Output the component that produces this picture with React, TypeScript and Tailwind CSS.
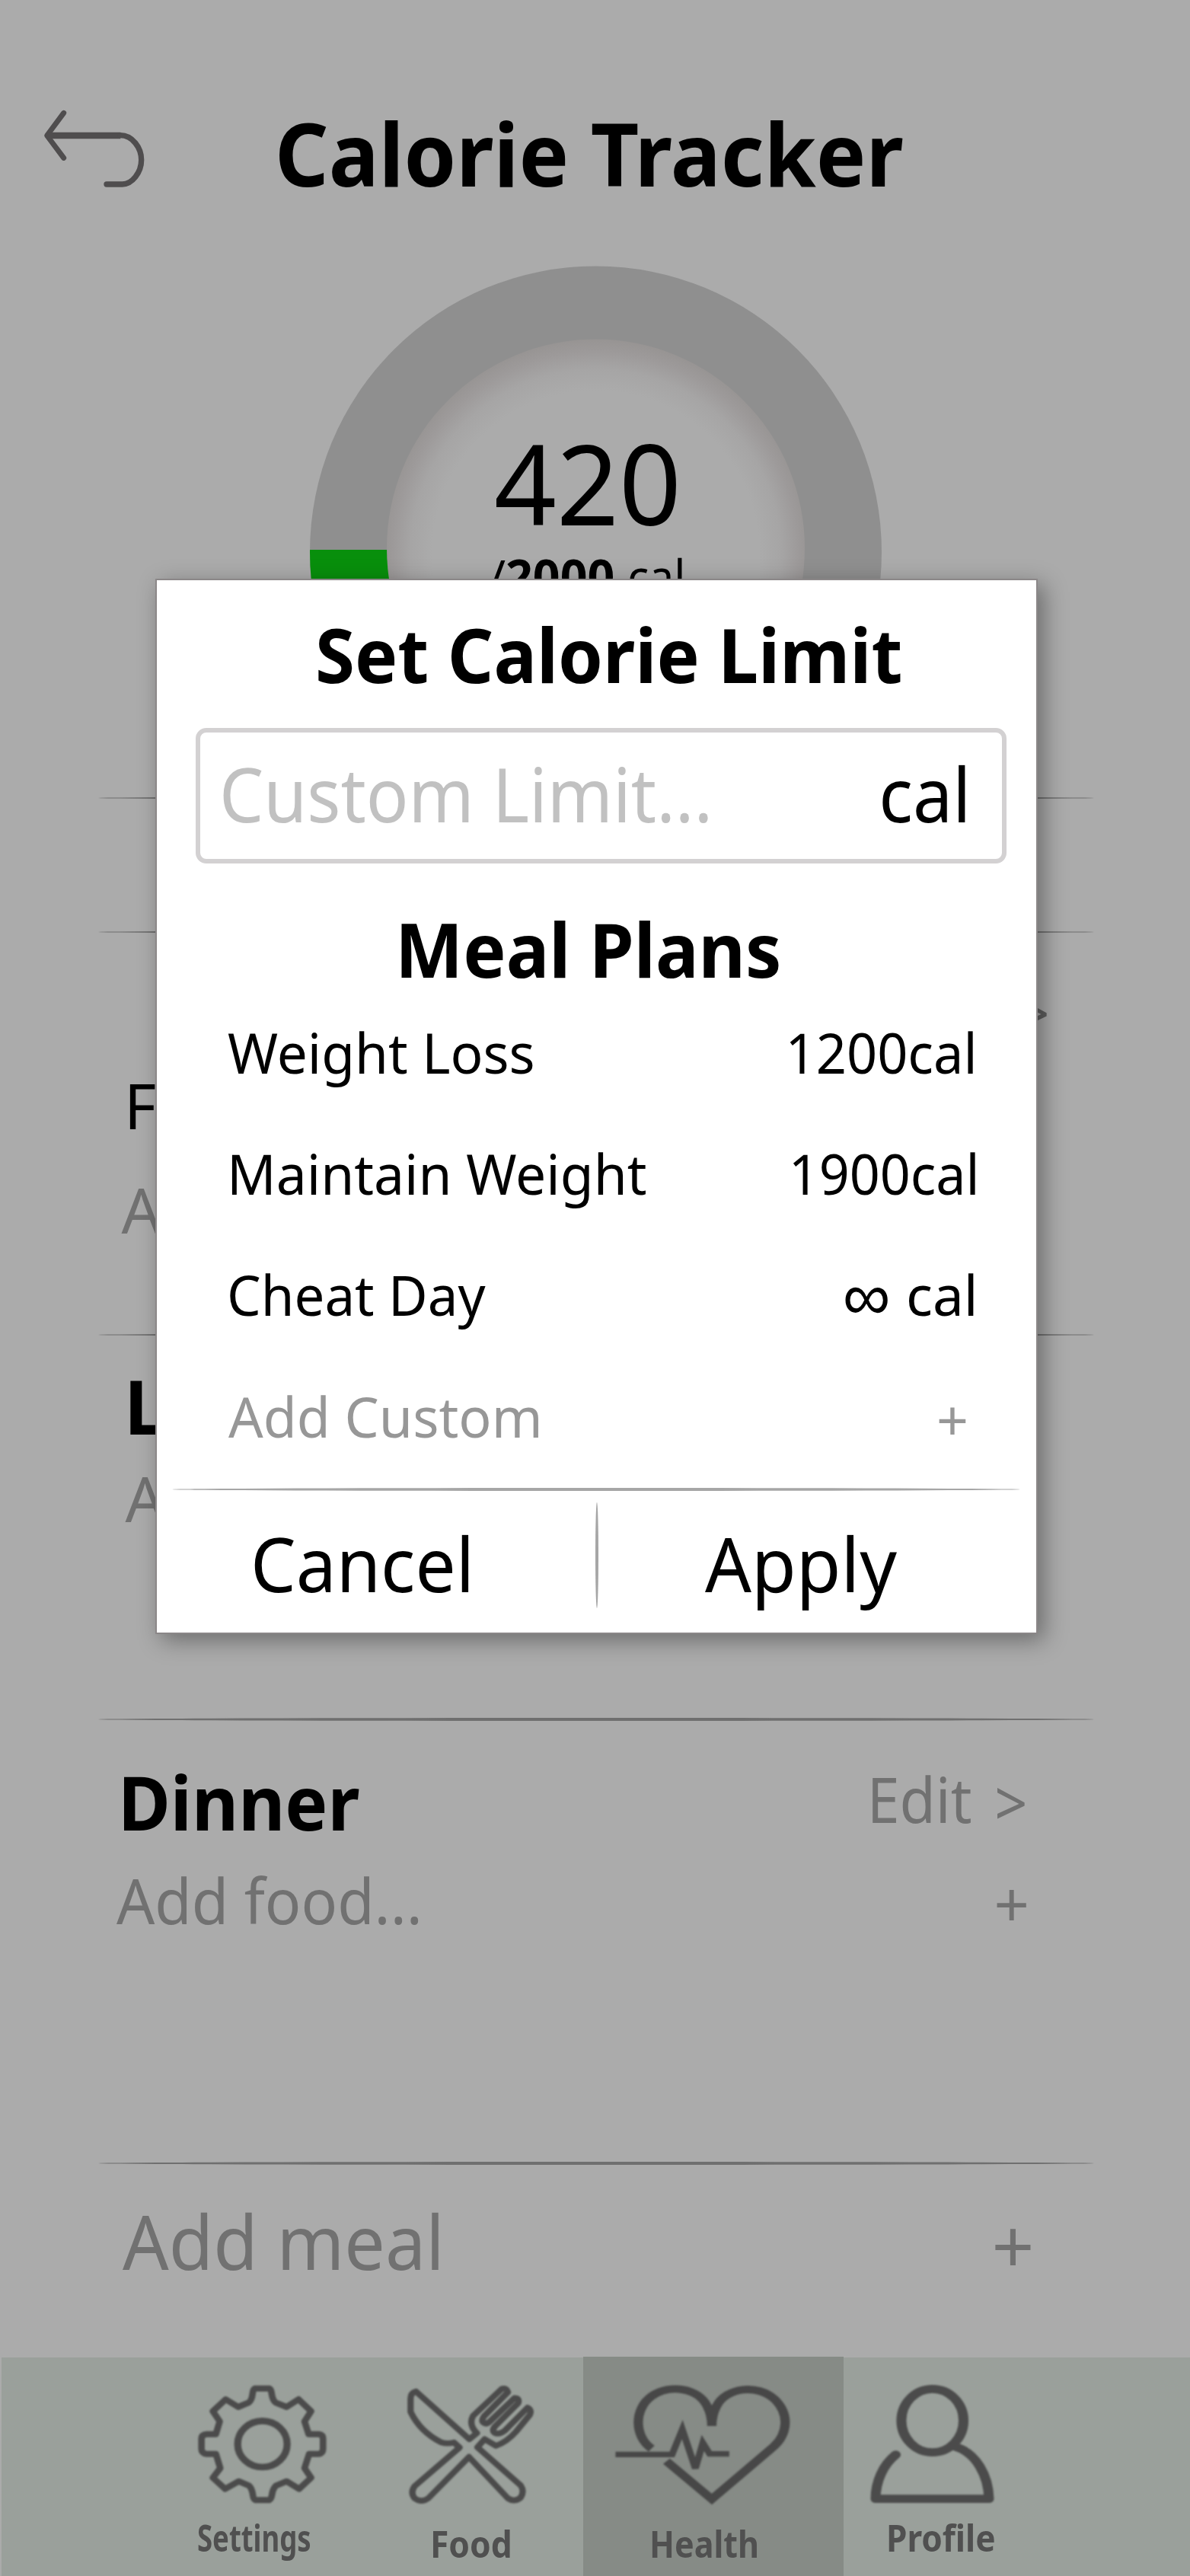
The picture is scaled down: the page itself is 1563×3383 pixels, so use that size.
import React from 'react';

function Divider({ className }: { className: string }) {
  return <div className={`h-[4px] shrink-0 rounded-[50%] ${className}`} />;
}

function BackArrow() {
  return (
    <svg className="h-[130px] w-[150px] shrink-0" viewBox="30 15 450 390" fill="none" stroke="#4f4d4e" strokeLinecap="round" strokeLinejoin="round">
      <path d="M131 55L65 144L131 232" strokeWidth="21" />
      <path d="M66 144H355" strokeWidth="26" strokeLinecap="butt" />
      <path d="M354 143C402 143 437 192 437 240C437 290 400 336 362 336H300" strokeWidth="22" />
    </svg>
  );
}

function CalorieRing() {
  return (
    <svg className="col-start-1 row-start-1 h-[752px] w-[752px]" viewBox="406 349 752 752">
      <defs>
        <clipPath id="ring">
          <circle cx="782.5" cy="725" r="375.5" />
        </clipPath>
        <radialGradient id="well" gradientUnits="userSpaceOnUse" cx="782.5" cy="728" r="283">
          <stop offset="0.76" stopColor="#ababab" />
          <stop offset="0.86" stopColor="#a6a5a5" />
          <stop offset="0.94" stopColor="#9d9a9a" />
          <stop offset="1" stopColor="#979493" />
        </radialGradient>
      </defs>
      <circle cx="782.5" cy="725" r="375.5" fill="#8f8f8f" />
      <rect x="406" y="722" width="376" height="160" fill="#088f0c" clipPath="url(#ring)" />
      <circle cx="782.5" cy="720" r="274.5" fill="url(#well)" />
    </svg>
  );
}

function Header() {
  return (
    <header className="flex h-[349px] items-start pt-[135px] pl-[50px]">
      <BackArrow />
      <h1 className="mt-[1px] ml-[161px] origin-left scale-x-[0.96] text-[114.7px] leading-[129px] font-bold">Calorie Tracker</h1>
    </header>
  );
}

function Progress() {
  return (
    <section className="grid h-[697px] grid-cols-[752px] items-start pl-[406px]">
      <CalorieRing />
      <div className="z-10 col-start-1 row-start-1 pt-[210px]">
        <div className="pl-[243px] text-[147px] leading-[148px]">
          <span className="inline-block origin-left scale-x-[0.975]">420</span>
        </div>
        <div className="mt-[9px] flex items-center text-[62px] leading-[80px]">
          <span className="ml-[235px]">/</span>
          <span className="origin-left scale-x-[1.01] font-bold">2000</span>
          <span className="ml-[18px] origin-left scale-x-[0.95]">cal</span>
        </div>
      </div>
    </section>
  );
}

function Meals() {
  return (
    <>
      <section className="h-[525px] pt-[50px] text-[81.3px] leading-[100px]">
        <div className="flex justify-end pr-[184px] text-[#606060]">
          <span className="mt-[4px] -mb-[4px] origin-right scale-x-[0.93]">&gt;</span>
        </div>
        <div className="mt-[26px] pl-[163px]">F</div>
        <div className="mt-[37px] pl-[159.5px] text-[#717171]">A</div>
      </section>
      <Divider className="ml-[129px] w-[1308px] bg-[#6f6f6f]" />
      <section className="h-[501px] pt-[31px]">
        <h2 className="pl-[163px] text-[98px] leading-[120px] font-bold">L</h2>
        <div className="mt-[12px] pl-[164.5px] text-[81.3px] leading-[100px] text-[#717171]">A</div>
      </section>
      <Divider className="ml-[129px] w-[1308px] bg-[#6f6f6f]" />
      <section className="h-[579px] pt-[46px] text-[81.3px] leading-[100px] text-[#717171]">
        <div className="flex h-[120px] items-center justify-between pr-[213px] pl-[154.5px]">
          <h2 className="origin-left scale-x-[0.96] text-[98px] leading-[120px] font-bold text-black">Dinner</h2>
          <div className="-mt-[6px] flex gap-[27px]">
            <span className="origin-right scale-x-[0.947]">Edit</span>
            <span className="mt-[4px] -mb-[4px] origin-right scale-x-[0.93]">&gt;</span>
          </div>
        </div>
        <div className="mt-[20px] flex justify-between pr-[211px] pl-[152.5px]">
          <span className="origin-left scale-x-[0.969]">Add food...</span>
          <span className="mt-[4px] -mb-[4px]">+</span>
        </div>
      </section>
      <Divider className="ml-[129px] w-[1308px] bg-[#6f6f6f]" />
      <div className="flex h-[253px] justify-between pt-[40px] pr-[204.5px] pl-[160.5px] text-[98px] leading-[120px] text-[#717171]">
        <span className="origin-left scale-x-[0.97]">Add meal</span>
        <span className="mt-[5px]">+</span>
      </div>
    </>
  );
}

function CalorieLimitDialog() {
  return (
    <div className="absolute top-[760px] left-[204px] z-20 h-[1386px] w-[1159px] border-2 border-[#8b8788] bg-white pt-[37px] shadow-[8px_8px_28px_rgba(0,0,0,0.37)]">
      <h2 className="pl-[207.5px] text-[98px] leading-[120px] font-bold">
        <span className="inline-block origin-left scale-x-[0.963]">Set Calorie Limit</span>
      </h2>
      <div className="mt-[37px] ml-[51px] flex h-[178px] w-[1065px] items-center justify-between rounded-[14px] border-[6px] border-[#d3d1d2] pr-[41px] pb-[6px] pl-[25px] text-[98px] leading-[120px]">
        <span className="origin-left scale-x-[0.941] text-[#c1c1c1]">Custom Limit...</span>
        <span className="origin-right scale-x-[0.95]">cal</span>
      </div>
      <h2 className="mt-[57px] pl-[313px] text-[98px] leading-[111px] font-bold">
        <span className="inline-block origin-left scale-x-[0.965]">Meal Plans</span>
      </h2>
      <div className="pr-[77px] pl-[92px] text-[73.5px] leading-[159px] whitespace-nowrap">
        <div className="flex h-[159px] justify-between">
          <span className="ml-[1px] origin-left scale-x-[0.968]">Weight Loss</span>
          <span className="origin-right scale-x-[0.956]">1200cal</span>
        </div>
        <div className="-mr-[3px] flex h-[159px] justify-between">
          <span className="origin-left scale-x-[0.971]">Maintain Weight</span>
          <span className="origin-right scale-x-[0.952]">1900cal</span>
        </div>
        <div className="flex h-[159px] justify-between">
          <span className="origin-left scale-x-[0.963]">Cheat Day</span>
          <div className="flex">
            <span className="text-[88px]">∞</span>
            <span className="ml-[19px] origin-right scale-x-[0.99]">cal</span>
          </div>
        </div>
        <div className="flex h-[159px] justify-between pt-[1px] text-[#979797]">
          <span className="ml-[2px] origin-left scale-x-[0.975]">Add Custom</span>
          <span className="mt-[4px] mr-[12px]">+</span>
        </div>
      </div>
      <Divider className="mt-[16px] ml-[20px] w-[1114px] bg-[#a6a6a6]" />
      <div className="flex h-[186px] text-[98px] leading-[191px]">
        <button className="w-[576px] pl-[123px] text-left">
          <span className="inline-block origin-left scale-x-[0.964]">Cancel</span>
        </button>
        <div className="mt-[15px] h-[139px] w-[4px] shrink-0 rounded-[50%] bg-[#a6a6a6]" />
        <button className="pl-[139.5px] text-left">
          <span className="inline-block origin-left scale-x-[0.975]">Apply</span>
        </button>
      </div>
    </div>
  );
}

const icon = 'h-[210px] w-full shrink-0 blur-[0.8px]';

function BottomNav() {
  return (
    <nav className="ml-[2px] flex h-[287px] items-stretch bg-[#9aa09b] pl-[198px] text-[49px] leading-[50px] font-bold text-[#505050]">
      <div className="flex w-[280px] flex-col items-start">
        <svg className={icon} viewBox="0 48 784 630" preserveAspectRatio="none" fill="none" stroke="#4b4b4b" strokeWidth="24" strokeLinejoin="round">
          <path d="M378 170H430Q437 172 439 190Q443 218 454 226L494 243L538 213L584 260L560 300L575 350H612Q628 352 628 368V408Q628 426 612 428H577L560 484L584 522L540 566L494 536L455 553Q443 565 440 590Q437 606 430 610H380Q372 608 370 590Q367 565 356 553L318 536L268 566L223 522L250 484L234 428H200Q181 426 181 408V368Q181 352 200 350H234L248 300L223 260L270 213L316 243L354 226Q366 218 369 190Q371 172 378 170Z" />
          <circle cx="405" cy="389" r="91" strokeWidth="26" />
        </svg>
        <span className="mt-[1px] ml-[59px] origin-left scale-x-[0.745] blur-[0.6px]">Settings</span>
      </div>
      <div className="flex w-[286px] flex-col items-start">
        <svg className={icon} viewBox="784 48 801 630" preserveAspectRatio="none" fill="none" stroke="#4b4b4b" strokeWidth="23" strokeLinejoin="round">
          <path d="M970 182Q950 188 950 210V262Q985 340 1062 382Q1085 390 1110 383L1130 403L965 555Q948 580 965 603Q990 622 1015 603L1165 440L1308 603Q1332 620 1355 600Q1370 575 1355 552L1196 402L1222 370L1264 396Q1305 380 1338 340L1388 275Q1398 255 1380 246L1298 335Q1275 355 1258 344Q1248 335 1262 318L1346 228Q1352 208 1332 208L1242 300Q1228 314 1216 303Q1210 295 1220 280L1308 185Q1302 165 1285 172L1180 278Q1162 312 1194 346L1166 370Z" />
        </svg>
        <span className="mt-[9px] ml-[84.5px] origin-left scale-x-[0.905] blur-[0.6px]">Food</span>
      </div>
      <div className="-mt-[1px] flex w-[342px] flex-col items-start bg-[#868b86] pt-[1px]">
        <svg className={icon} viewBox="64 48 838 630" preserveAspectRatio="none" fill="none" stroke="#474747" strokeLinejoin="miter">
          <path d="M284 407C228 360 226 250 285 200C345 150 435 170 463 240Q478 275 478 318Q478 275 493 240C525 165 625 150 682 215C730 275 720 350 678 398L478 606L332 457" strokeWidth="30" />
          <path d="M168 430H350L383 332L425 485L449 385L471 428H534" strokeWidth="22" />
        </svg>
        <span className="mt-[9px] ml-[86.5px] origin-left scale-x-[0.879] blur-[0.6px]">Health</span>
      </div>
      <div className="flex w-[282px] flex-col items-start">
        <svg className={icon} viewBox="902 48 691 630" preserveAspectRatio="none" fill="none" stroke="#4b4b4b" strokeWidth="32" strokeLinejoin="round" strokeLinecap="round">
          <ellipse cx="1188" cy="297" rx="100" ry="125" />
          <path d="M1070 431C1030 470 1005 535 1005 605H1370C1368 515 1330 425 1262 400" />
        </svg>
        <span className="mt-[1px] ml-[55.5px] origin-left scale-x-[0.901] blur-[0.6px]">Profile</span>
      </div>
    </nav>
  );
}

export default function App() {
  return (
    <div className="relative h-[3383px] w-[1563px] overflow-hidden bg-[#ababab] font-['Noto_Sans',sans-serif] text-black">
      <Header />
      <Progress />
      <Divider className="ml-[129px] w-[1308px] bg-[#6f6f6f]" />
      <div className="h-[172px]" />
      <Divider className="ml-[129px] w-[1308px] bg-[#6f6f6f]" />
      <Meals />
      <BottomNav />
      <CalorieLimitDialog />
    </div>
  );
}
